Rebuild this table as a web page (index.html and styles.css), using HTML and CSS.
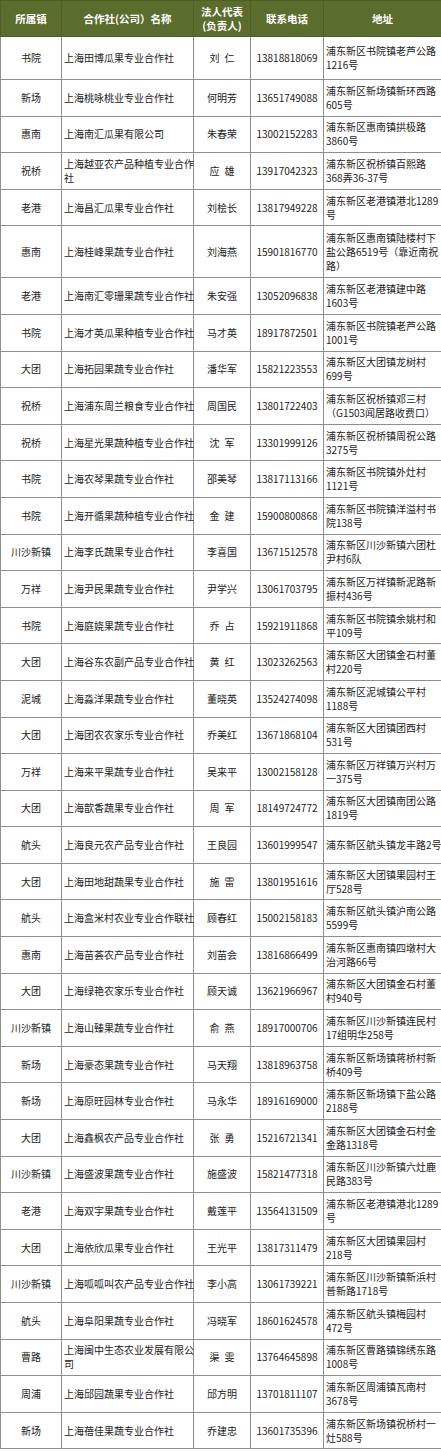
FILE: index.html
```html
<!DOCTYPE html>
<html lang="zh-CN">
<head>
<meta charset="utf-8">
<title>合作社名录</title>
<link rel="stylesheet" href="styles.css">
</head>
<body>
<table class="coop">
<colgroup>
<col class="c-town"><col class="c-name"><col class="c-rep"><col class="c-tel"><col class="c-addr">
</colgroup>
<thead>
<tr><th>所属镇</th><th>合作社(公司）名称</th><th>法人代表<br>(负责人)</th><th>联系电话</th><th>地址</th></tr>
</thead>
<tbody>
<tr class="first"><td class="town">书院</td><td class="name">上海田博瓜果专业合作社</td><td class="rep">刘&ensp;仁</td><td class="tel">13818818069</td><td class="addr">浦东新区书院镇老芦公路<br>1216号</td></tr>
<tr><td class="town">新场</td><td class="name">上海桃咏桃业专业合作社</td><td class="rep">何明芳</td><td class="tel">13651749088</td><td class="addr">浦东新区新场镇新环西路<br>605号</td></tr>
<tr><td class="town">惠南</td><td class="name">上海南汇瓜果有限公司</td><td class="rep">朱春荣</td><td class="tel">13002152283</td><td class="addr">浦东新区惠南镇拱极路<br>3860号</td></tr>
<tr><td class="town">祝桥</td><td class="name">上海越亚农产品种植专业合作<br>社</td><td class="rep">应&ensp;雄</td><td class="tel">13917042323</td><td class="addr">浦东新区祝桥镇百熙路<br>368弄36-37号</td></tr>
<tr><td class="town">老港</td><td class="name">上海昌汇瓜果专业合作社</td><td class="rep">刘桧长</td><td class="tel">13817949228</td><td class="addr">浦东新区老港镇港北1289<br>号</td></tr>
<tr class="tall"><td class="town">惠南</td><td class="name">上海桂峰果蔬专业合作社</td><td class="rep">刘海燕</td><td class="tel">15901816770</td><td class="addr">浦东新区惠南镇陆楼村下<br>盐公路6519号（靠近南祝<br>路）</td></tr>
<tr><td class="town">老港</td><td class="name">上海南汇零珊果蔬专业合作社</td><td class="rep">朱安强</td><td class="tel">13052096838</td><td class="addr">浦东新区老港镇建中路<br>1603号</td></tr>
<tr><td class="town">书院</td><td class="name">上海才英瓜果种植专业合作社</td><td class="rep">马才英</td><td class="tel">18917872501</td><td class="addr">浦东新区书院镇老芦公路<br>1001号</td></tr>
<tr><td class="town">大团</td><td class="name">上海拓园果蔬专业合作社</td><td class="rep">潘华军</td><td class="tel">15821223553</td><td class="addr">浦东新区大团镇龙树村<br>699号</td></tr>
<tr><td class="town">祝桥</td><td class="name">上海浦东周兰粮食专业合作社</td><td class="rep">周国民</td><td class="tel">13801722403</td><td class="addr">浦东新区祝桥镇邓三村<br>（G1503闻居路收费口）</td></tr>
<tr><td class="town">祝桥</td><td class="name">上海星光果蔬种植专业合作社</td><td class="rep">沈&ensp;军</td><td class="tel">13301999126</td><td class="addr">浦东新区祝桥镇周祝公路<br>3275号</td></tr>
<tr><td class="town">书院</td><td class="name">上海农琴果蔬专业合作社</td><td class="rep">邵美琴</td><td class="tel">13817113166</td><td class="addr">浦东新区书院镇外灶村<br>1121号</td></tr>
<tr><td class="town">书院</td><td class="name">上海开循果蔬种植专业合作社</td><td class="rep">金&ensp;建</td><td class="tel">15900800868</td><td class="addr">浦东新区书院镇洋溢村书<br>院138号</td></tr>
<tr><td class="town">川沙新镇</td><td class="name">上海李氏蔬果专业合作社</td><td class="rep">李喜国</td><td class="tel">13671512578</td><td class="addr">浦东新区川沙新镇六团杜<br>尹村6队</td></tr>
<tr><td class="town">万祥</td><td class="name">上海尹民果蔬专业合作社</td><td class="rep">尹学兴</td><td class="tel">13061703795</td><td class="addr">浦东新区万祥镇新泥路新<br>振村436号</td></tr>
<tr><td class="town">书院</td><td class="name">上海庭娆果蔬专业合作社</td><td class="rep">乔&ensp;占</td><td class="tel">15921911868</td><td class="addr">浦东新区书院镇余姚村和<br>平109号</td></tr>
<tr><td class="town">大团</td><td class="name">上海谷东农副产品专业合作社</td><td class="rep">黄&ensp;红</td><td class="tel">13023262563</td><td class="addr">浦东新区大团镇金石村董<br>村220号</td></tr>
<tr><td class="town">泥城</td><td class="name">上海淼洋果蔬专业合作社</td><td class="rep">董晓英</td><td class="tel">13524274098</td><td class="addr">浦东新区泥城镇公平村<br>1188号</td></tr>
<tr><td class="town">大团</td><td class="name">上海团农农家乐专业合作社</td><td class="rep">乔美红</td><td class="tel">13671868104</td><td class="addr">浦东新区大团镇团西村<br>531号</td></tr>
<tr><td class="town">万祥</td><td class="name">上海来平果蔬专业合作社</td><td class="rep">吴来平</td><td class="tel">13002158128</td><td class="addr">浦东新区万祥镇万兴村万<br>一375号</td></tr>
<tr><td class="town">大团</td><td class="name">上海歆香蔬果专业合作社</td><td class="rep">周&ensp;军</td><td class="tel">18149724772</td><td class="addr">浦东新区大团镇南团公路<br>1819号</td></tr>
<tr><td class="town">航头</td><td class="name">上海良元农产品专业合作社</td><td class="rep">王良园</td><td class="tel">13601999547</td><td class="addr">浦东新区航头镇龙丰路2号</td></tr>
<tr><td class="town">大团</td><td class="name">上海田地甜蔬果专业合作社</td><td class="rep">施&ensp;雷</td><td class="tel">13801951616</td><td class="addr">浦东新区大团镇果园村王<br>厅528号</td></tr>
<tr><td class="town">航头</td><td class="name">上海盒米村农业专业合作联社</td><td class="rep">顾春红</td><td class="tel">15002158183</td><td class="addr">浦东新区航头镇沪南公路<br>5599号</td></tr>
<tr><td class="town">惠南</td><td class="name">上海苗荟农产品专业合作社</td><td class="rep">刘苗会</td><td class="tel">13816866499</td><td class="addr">浦东新区惠南镇四墩村大<br>治河路66号</td></tr>
<tr><td class="town">大团</td><td class="name">上海绿艳农家乐专业合作社</td><td class="rep">顾天诚</td><td class="tel">13621966967</td><td class="addr">浦东新区大团镇金石村董<br>村940号</td></tr>
<tr><td class="town">川沙新镇</td><td class="name">上海山臻果蔬专业合作社</td><td class="rep">俞&ensp;燕</td><td class="tel">18917000706</td><td class="addr">浦东新区川沙新镇连民村<br>17组明华258号</td></tr>
<tr><td class="town">新场</td><td class="name">上海豪态果蔬专业合作社</td><td class="rep">马天翔</td><td class="tel">13818963758</td><td class="addr">浦东新区新场镇蒋桥村新<br>桥409号</td></tr>
<tr><td class="town">新场</td><td class="name">上海原旺园林专业合作社</td><td class="rep">马永华</td><td class="tel">18916169000</td><td class="addr">浦东新区新场镇下盐公路<br>2188号</td></tr>
<tr><td class="town">大团</td><td class="name">上海鑫枫农产品专业合作社</td><td class="rep">张&ensp;勇</td><td class="tel">15216721341</td><td class="addr">浦东新区大团镇金石村金<br>金路1318号</td></tr>
<tr><td class="town">川沙新镇</td><td class="name">上海盛波果蔬专业合作社</td><td class="rep">施盛波</td><td class="tel">15821477318</td><td class="addr">浦东新区川沙新镇六灶鹿<br>民路383号</td></tr>
<tr><td class="town">老港</td><td class="name">上海双宇果蔬专业合作社</td><td class="rep">戴莲平</td><td class="tel">13564131509</td><td class="addr">浦东新区老港镇港北1289<br>号</td></tr>
<tr><td class="town">大团</td><td class="name">上海依欣瓜果专业合作社</td><td class="rep">王光平</td><td class="tel">13817311479</td><td class="addr">浦东新区大团镇果园村<br>218号</td></tr>
<tr><td class="town">川沙新镇</td><td class="name">上海呱呱叫农产品专业合作社</td><td class="rep">李小高</td><td class="tel">13061739221</td><td class="addr">浦东新区川沙新镇新浜村<br>普新路1718号</td></tr>
<tr><td class="town">航头</td><td class="name">上海阜阳果蔬专业合作社</td><td class="rep">冯晓军</td><td class="tel">18601624578</td><td class="addr">浦东新区航头镇梅园村<br>472号</td></tr>
<tr><td class="town">曹路</td><td class="name">上海闽中生态农业发展有限公<br>司</td><td class="rep">渠&ensp;雯</td><td class="tel">13764645898</td><td class="addr">浦东新区曹路镇锦绣东路<br>1008号</td></tr>
<tr><td class="town">周浦</td><td class="name">上海邱园蔬果专业合作社</td><td class="rep">邱方明</td><td class="tel">13701811107</td><td class="addr">浦东新区周浦镇瓦南村<br>3678号</td></tr>
<tr><td class="town">新场</td><td class="name">上海蓓佳果蔬专业合作社</td><td class="rep">乔建忠</td><td class="tel">13601735396</td><td class="addr">浦东新区新场镇祝桥村一<br>灶588号</td></tr>
</tbody>
</table>
</body>
</html>
```
FILE: styles.css
```css
html, body {
  margin: 0;
  padding: 0;
  background: #ffffff;
}
body {
  font-family: "Noto Sans CJK SC", "Noto Sans", sans-serif;
  font-size: 10px;
  color: #222222;
}
.coop {
  width: 441px;
  border-collapse: collapse;
  table-layout: fixed;
}
.c-town { width: 61px; }
.c-name { width: 132px; }
.c-rep { width: 57px; }
.c-tel { width: 73px; }
.c-addr { width: 118px; }

.coop th {
  background: #5a6d2d;
  color: #ffffff;
  font-weight: bold;
  font-size: 10.5px;
  line-height: 14px;
  height: 35px;
  padding: 0;
  text-align: center;
  vertical-align: middle;
  border: 1px solid #4e5f26;
}
.coop td {
  height: 35.6px;
  padding: 0 2px;
  line-height: 14px;
  vertical-align: middle;
  border: 1px solid #8f8f8f;
  white-space: nowrap;
  overflow: visible;
}
.coop tr.first td { height: 42px; }
.coop tr.tall td { height: 51px; }

.town, .rep, .tel { text-align: center; }
.name, .addr { text-align: left; }
.tel { padding: 0; }
```
